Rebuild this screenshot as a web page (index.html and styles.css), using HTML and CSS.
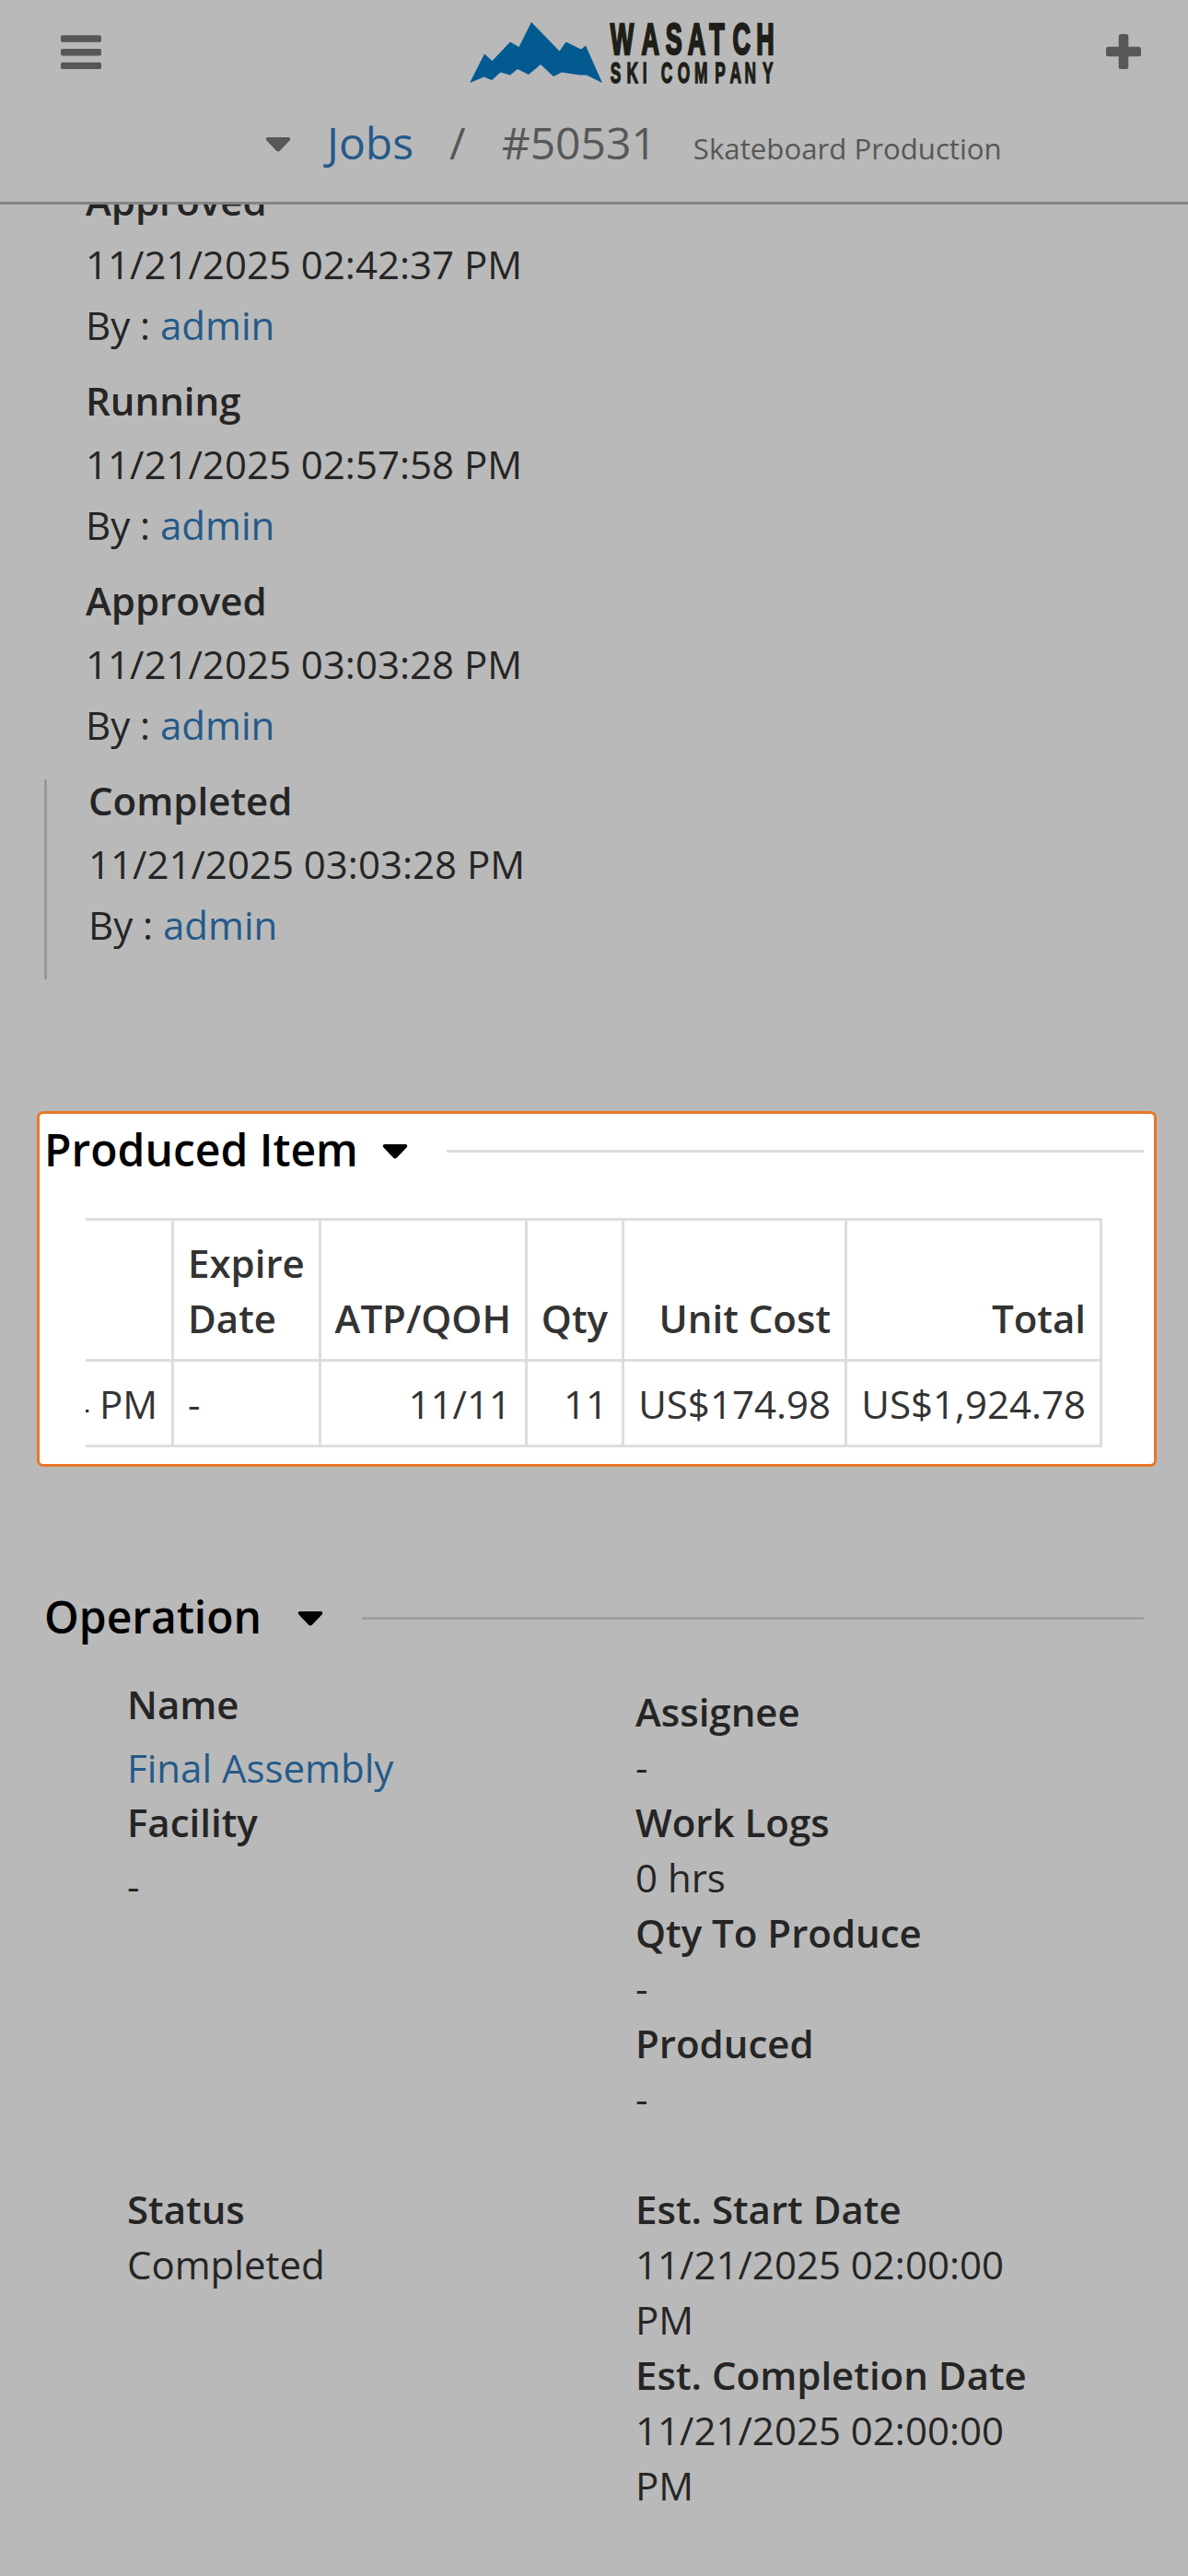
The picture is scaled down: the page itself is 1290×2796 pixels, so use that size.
FILE: index.html
```html
<!DOCTYPE html>
<html lang="en">
<head>
<meta charset="utf-8">
<title>Jobs / #50531</title>
<link rel="stylesheet" href="styles.css">
</head>
<body>
<header class="topbar">
  <div class="topbar-row">
    <svg class="menu-icon" width="44" height="38" viewBox="0 0 44 38" fill="currentColor"><rect y="0.3" width="44" height="7.5" rx="1.8"/><rect y="15.1" width="44" height="7.5" rx="1.8"/><rect y="29.8" width="44" height="7.3" rx="1.8"/></svg>
    <svg class="logo" width="332" height="68" viewBox="0 0 332 68">
      <path fill="#025a91" d="M0 66 L16 34.5 L24.5 42 L44 21.5 L53.5 27 L67 0 L97.500 31.500 L104.500 21.500 L121 29.500 L126 25.500 L144 66 L127 57.500 H120 L100 54.500 L91 59 L77 46 L64 57 L52 51 L44 57.500 L33.500 54.500 L24 63 L15.500 59.500 Z"/>
      <g class="logo-text">
        <text class="logo-name" transform="translate(0.5 34.500) scale(.56 1)" x="272 332 379 422 464 509 555" y="0">WASATCH</text>
        <text class="logo-sub" transform="translate(0.5 65.500) scale(.54 1)" x="282 315 347 362 384 417 451 492 522 552 588" y="0">SKI COMPANY</text>
      </g>
    </svg>
    <svg class="plus-icon" width="38" height="38" viewBox="0 0 38 38" fill="currentColor"><rect x="13.700" width="10.600" height="38" rx="2.500"/><rect y="13.700" width="38" height="10.600" rx="2.500"/></svg>
  </div>
  <nav class="crumbs">
    <svg class="caret" width="28" height="16" viewBox="0 0 28 16"><path d="M2.500 0 H25.500 Q28.500 1 26.500 3.500 L16 14.500 Q14 16.500 12 14.500 L1.500 3.500 Q-.5 1 2.500 0 Z"/></svg>
    <a>Jobs</a><span>/</span><span>#50531</span><small>Skateboard Production</small>
  </nav>
</header>
<main>
  <section class="timeline">
    <div class="event"><b>Approved</b><p>11/21/2025 02:42:37 PM</p><p>By : <a>admin</a></p></div>
    <div class="event"><b>Running</b><p>11/21/2025 02:57:58 PM</p><p>By : <a>admin</a></p></div>
    <div class="event"><b>Approved</b><p>11/21/2025 03:03:28 PM</p><p>By : <a>admin</a></p></div>
    <div class="event current"><b>Completed</b><p>11/21/2025 03:03:28 PM</p><p>By : <a>admin</a></p></div>
  </section>
  <section class="produced">
    <h2 class="heading"><span class="heading-text wide">Produced Item</span>
      <svg class="caret" width="28" height="16" viewBox="0 0 28 16"><path d="M2.500 0 H25.500 Q28.500 1 26.500 3.500 L16 14.500 Q14 16.500 12 14.500 L1.500 3.500 Q-.5 1 2.500 0 Z"/></svg>
      <i class="rule"></i></h2>
    <div class="scroller">
      <table>
        <colgroup><col class="c-date"><col class="c-expire"><col class="c-atp"><col class="c-qty"><col class="c-cost"><col class="c-total"></colgroup>
        <tr><th></th><th class="left">Expire Date</th><th>ATP/QOH</th><th>Qty</th><th>Unit Cost</th><th>Total</th></tr>
        <tr><td>4 PM</td><td class="left">-</td><td>11/11</td><td>11</td><td>US$174.98</td><td>US$1,924.78</td></tr>
      </table>
    </div>
  </section>
  <section class="operation">
    <h2 class="heading"><span class="heading-text">Operation</span>
      <svg class="caret" width="28" height="16" viewBox="0 0 28 16"><path d="M2.500 0 H25.500 Q28.500 1 26.500 3.500 L16 14.500 Q14 16.500 12 14.500 L1.500 3.500 Q-.5 1 2.500 0 Z"/></svg>
      <i class="rule"></i></h2>
    <div class="details">
      <div class="links"><b>Name</b><p><a>Final Assembly</a></p><b>Facility</b><p>-</p></div>
      <div class="stats"><b>Assignee</b><p>-</p><b>Work Logs</b><p>0 hrs</p><b>Qty To Produce</b><p>-</p><b>Produced</b><p>-</p></div>
      <div><b>Status</b><p>Completed</p></div>
      <div><b>Est. Start Date</b><p>11/21/2025 02:00:00 PM</p><b>Est. Completion Date</b><p>11/21/2025 02:00:00 PM</p></div>
    </div>
  </section>
</main>
</body>
</html>
```
FILE: styles.css
```css
* { box-sizing: border-box; }
body {
  margin: 0;
  height: 2796px;
  overflow: hidden;
  background: #b9b9b9;
  color: #252525;
  font: 42px/60px "Open Sans", "Noto Sans", sans-serif;
}
p { margin: 0; }
b, th { display: block; font-weight: 600; }
a { color: #245a8a; }
svg { display: block; flex: none; overflow: visible; }
.caret { fill: currentColor; }

.topbar {
  position: relative;
  z-index: 1;
  height: 222px;
  background: #b9b9b9;
  border-bottom: 3px solid #848484;
  color: #575757;
}
.topbar-row {
  display: flex;
  padding: 24px 51px 0 66px;
  height: 122px;
}
.menu-icon { margin-top: 14px; }
.plus-icon { margin: 13px 0 0 auto; }
.logo { margin-left: 400px; }
.logo-text {
  fill: #1e1e18;
  stroke: #1e1e18;
  font-family: "Liberation Sans", Arial, sans-serif;
  font-weight: 700;
}
.logo-name { font-size: 48px; stroke-width: 2.500px; }
.logo-sub { font-size: 32px; stroke-width: 1.500px; }
.crumbs {
  display: flex;
  align-items: baseline;
  gap: 39px;
  padding-left: 288px;
  font-size: 48px;
  line-height: 66px;
  white-space: nowrap;
}
.crumbs .caret { align-self: flex-start; margin-top: 27px; }
.crumbs small { margin-left: 1px; font-size: 31.200px; }

.timeline { margin: -27px 48px 0; }
.event {
  display: flex;
  flex-direction: column;
  height: 217px;
  padding-left: 45px;
}
.event b { margin-bottom: 13px; line-height: 46px; }
.event p { line-height: 66px; }
.event.current { border-left: 3px solid #989898; }

.heading {
  display: flex;
  align-items: center;
  margin: 0;
  height: 65px;
  color: #000;
  font-size: 48px;
  line-height: 65px;
  font-weight: 600;
  white-space: nowrap;
}
.heading-text { width: 275px; }
.heading-text.wide { width: 367px; }
.heading .caret { margin-top: 5px; }
.rule { flex: 1; height: 3px; margin: 4px 0 0 42px; background: #a0a0a0; }

.produced {
  width: 1216px;
  height: 386px;
  margin: 143px 0 0 40px;
  padding: 6px 11px 0 5px;
  background: #fff;
  border: 3px solid #e87826;
  border-radius: 7px;
  color: #333;
}
.produced .rule { background: #ddd; }
.scroller {
  display: flex;
  justify-content: flex-end;
  width: 1104px;
  margin: 42px 0 0 45px;
  overflow: hidden;
}
table {
  flex: none;
  width: 1161px;
  table-layout: fixed;
  border-collapse: collapse;
}
.c-date { width: 150px; }
.c-expire { width: 160px; }
.c-atp { width: 224px; }
.c-qty { width: 105px; }
.c-cost { width: 242px; }
.c-total { width: 277px; }
th, td {
  display: table-cell;
  padding: 15px 15px 14px 13px;
  border: 3px solid #ddd;
  text-align: right;
  vertical-align: bottom;
}
.left { padding-left: 15px; text-align: left; }
th.left { padding-right: 10px; }
tr:first-child { height: 153px; }
tr:last-child { height: 93px; }

.operation { margin: 130px 48px 0; }
.details {
  display: grid;
  grid-template-columns: 552px 440px;
  grid-template-rows: 548px auto;
  padding: 33px 0 0 90px;
}
.links b { margin-bottom: 9px; }
.links p { margin-bottom: -1px; }
.stats { padding-top: 8px; }
```
